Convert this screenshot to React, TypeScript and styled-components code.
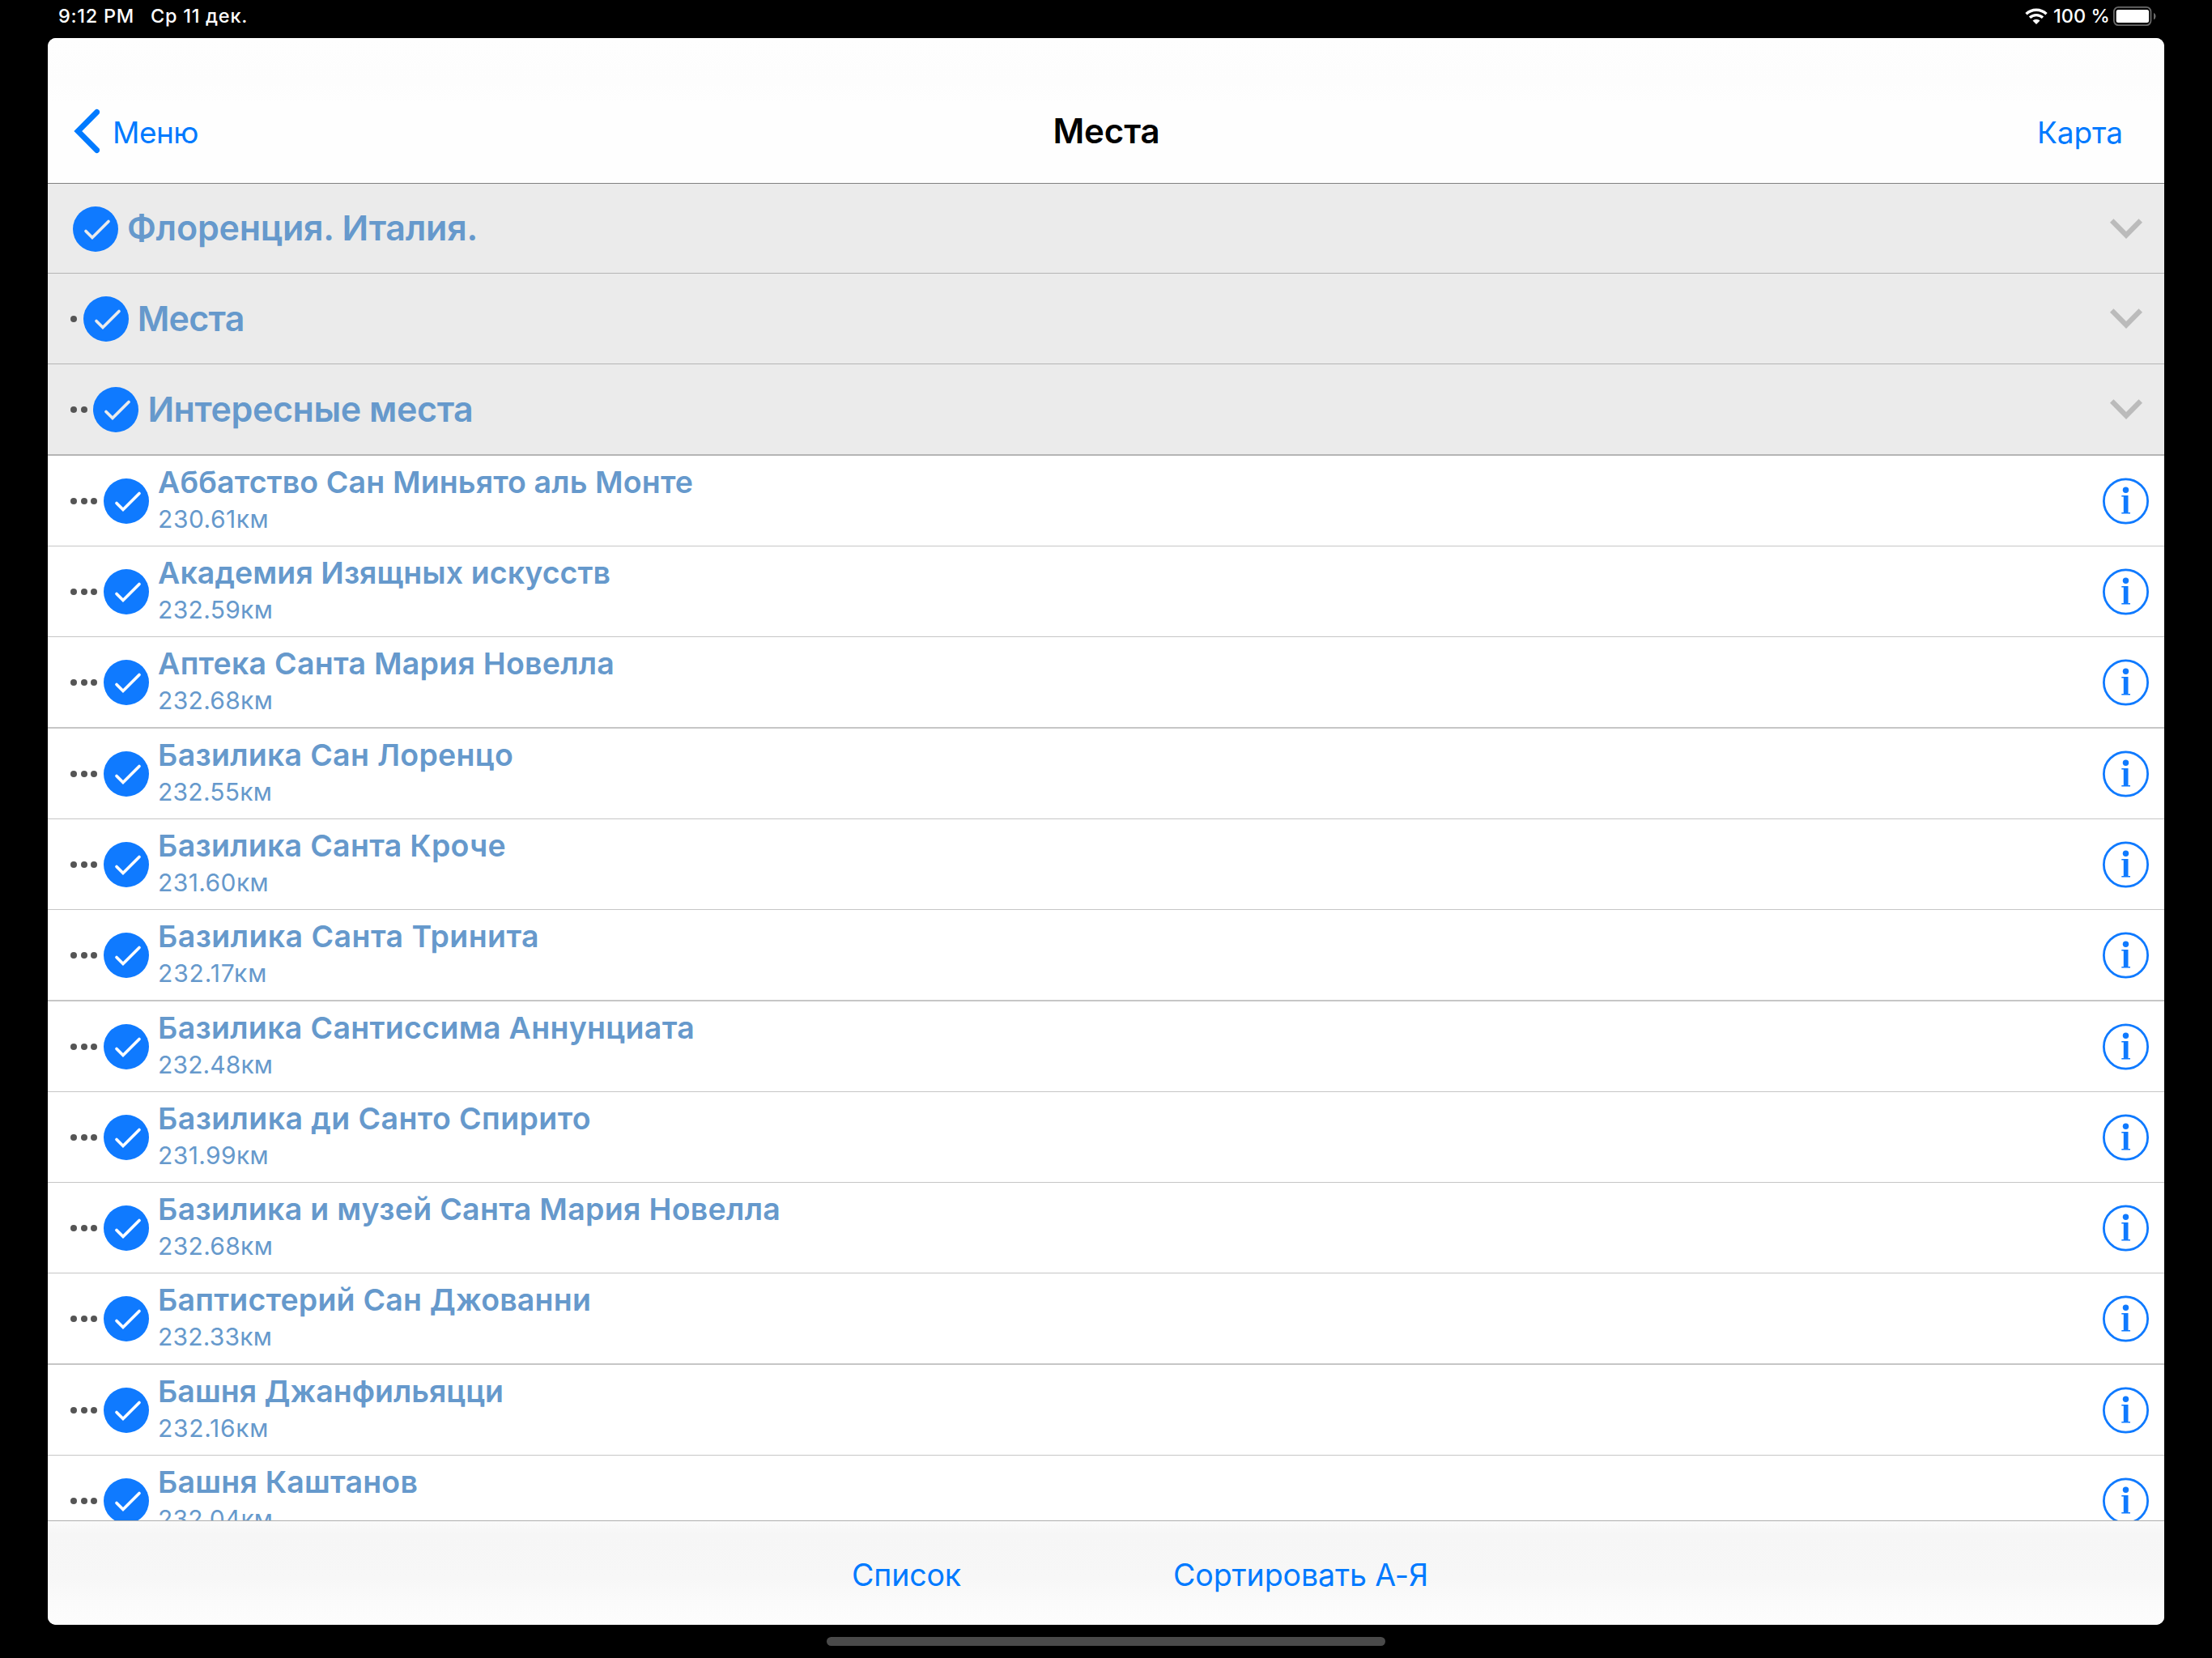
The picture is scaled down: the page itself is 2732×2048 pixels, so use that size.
import React, { useLayoutEffect, useRef } from "react";
import styled, { createGlobalStyle } from "styled-components";

const GlobalStyle = createGlobalStyle`
  * { box-sizing: border-box; }
  html, body { margin: 0; background: #000; }
  body { font-family: Inter, "Liberation Sans", sans-serif; -webkit-font-smoothing: antialiased; }
`;

const Screen = styled.div`
  width: 2732px;
  height: 2048px;
  background: #000;
  display: flex;
  flex-direction: column;
  overflow: hidden;
`;

const StatusBar = styled.header`
  height: 47px;
  padding: 0 69px 0 72px;
  display: flex;
  justify-content: space-between;
  align-items: flex-start;
  color: #fff;
`;

const StatusGroup = styled.div<{ $gap: number }>`
  display: flex;
  align-items: center;
  height: 40px;
  gap: ${(p) => p.$gap}px;
`;

const AppWindow = styled.main`
  width: 2614px;
  height: 1960px;
  margin-left: 59px;
  border-radius: 10px;
  background: #fff;
  overflow: hidden;
  display: flex;
  flex-direction: column;
`;

const NavBar = styled.nav`
  height: 180px;
  flex: none;
  padding: 50px 51px 0 32px;
  display: grid;
  grid-template-columns: 1fr auto 1fr;
  align-items: center;
  background: linear-gradient(#fefefe 0, #fdfdfd 30%, #fefefe 45%, #fefefe 100%);
  border-bottom: 1px solid #808080;
`;

const NavTitle = styled.div`
  margin: 0 -10px 0 10px;
`;

const NavButton = styled.button<{ $end?: boolean }>`
  border: 0;
  padding: ${(p) => (p.$end ? 4 : 0)}px 0 0;
  background: none;
  font: inherit;
  color: #007aff;
  display: flex;
  align-items: center;
  gap: 16px;
  justify-self: ${(p) => (p.$end ? "end" : "start")};
  span { padding-top: ${(p) => (p.$end ? 0 : 4)}px; }
`;

const List = styled.ul`
  list-style: none;
  margin: 0;
  padding: 0;
  flex: 1;
  min-height: 0;
  overflow: hidden;
`;

const Row = styled.li<{ $section?: boolean; $height: number; $line: number }>`
  height: ${(p) => p.$height}px;
  padding: 1px ${(p) => (p.$section ? 27 : 18)}px 0 28px;
  display: flex;
  align-items: center;
  background: ${(p) => (p.$section ? "#ebebeb" : "#fff")};
  border-bottom: ${(p) => p.$line}px solid ${(p) => (p.$section ? "#b5b5b5" : "#c6c6c6")};
`;

const Dots = styled.span<{ $count: number }>`
  flex: none;
  width: ${(p) => p.$count * 12.7 + 3}px;
  height: 8px;
  margin-top: -1px;
  display: flex;
  gap: 4.7px;
  i {
    flex: none;
    width: 8px;
    height: 8px;
    border-radius: 50%;
    background: #555;
  }
`;

const Labels = styled.div<{ $lift: number }>`
  flex: 1;
  min-width: 0;
  margin-left: 11px;
  height: 100%;
  padding-bottom: ${(p) => p.$lift}px;
  display: flex;
  flex-direction: column;
  justify-content: center;
  color: #6699cc;
`;

const Toolbar = styled.footer`
  flex: none;
  height: 129px;
  border-top: 1px solid #aeaeae;
  background: linear-gradient(#fafafa 0, #f6f6f6 12%, #f7f7f7 55%, #fbfbfb 80%, #fdfdfd 100%);
  padding: 5px 0 0 993px;
  display: flex;
  align-items: center;
  gap: 262px;
  color: #007aff;
`;

const HomeArea = styled.div`
  flex: 1;
  display: flex;
  justify-content: center;
  padding-top: 15px;
`;

const HomeBar = styled.div`
  width: 690px;
  height: 11px;
  border-radius: 6px;
  background: #4a4a4a;
`;

const Line = styled.span<{ $size: number; $weight: number; $height: number }>`
  display: block;
  width: max-content;
  white-space: nowrap;
  font-size: ${(p) => p.$size}px;
  font-weight: ${(p) => p.$weight};
  line-height: ${(p) => p.$height}px;
`;

type FitProps = { text: string; width: number; size: number; weight?: number; height: number };

/* A line of text tracked so that it fills the given width. */
function Fit({ text, width, size, weight = 400, height }: FitProps) {
  const ref = useRef<HTMLSpanElement>(null);
  useLayoutEffect(() => {
    const el = ref.current;
    if (!el) return;
    el.style.letterSpacing = "0px";
    const natural = el.getBoundingClientRect().width;
    el.style.letterSpacing = `${(width - natural) / text.length}px`;
  }, [text, width, size]);
  return (
    <Line ref={ref} $size={size} $weight={weight} $height={height}>
      {text}
    </Line>
  );
}

const Icon = styled.svg`
  display: block;
  flex: none;
`;

const WifiIcon = styled(Icon)`
  margin-right: 3px;
`;

const Check = ({ section }: { section?: boolean }) => (
  <Icon width="56" height="56" viewBox="0 0 56 56">
    <circle cx="28" cy="28" r="28" fill="#0f7aff" />
    <path d="M16 30.5 L24 38.5 L44 18.5" fill="none" stroke={section ? "#ebebeb" : "#fff"} strokeWidth="3.7" strokeLinecap="round" />
  </Icon>
);

const Chevron = () => (
  <Icon width="40" height="26" viewBox="0 0 40 26">
    <path d="M2.2 2.5 L20 20.5 L37.8 2.5" fill="none" stroke="#bbb" strokeWidth="6.4" />
  </Icon>
);

const Info = () => (
  <Icon width="58" height="58" viewBox="0 0 58 58">
    <circle cx="28.5" cy="29" r="27.1" fill="none" stroke="#0f7aff" strokeWidth="2.8" />
    <circle cx="28.5" cy="15.2" r="3.7" fill="#0f7aff" />
    <path d="M23.3 22 H31.5 V43 H34 V44.4 H23.3 V43 H25.8 V23.6 H23.3 Z" fill="#0f7aff" />
  </Icon>
);

const BackArrow = () => (
  <Icon width="32" height="56" viewBox="0 0 32 56">
    <path d="M28.6 4.5 L5.3 28 L28.6 51.5" fill="none" stroke="#007aff" strokeWidth="7" strokeLinecap="round" />
  </Icon>
);

const Wifi = () => (
  <WifiIcon width="28" height="20" viewBox="0 0 28 20">
    <g fill="none" stroke="#fff" strokeWidth="3.3">
      <path d="M1.5 7.3 A18 18 0 0 1 26.5 7.3" />
      <path d="M6 11.8 A11.5 11.5 0 0 1 22 11.8" />
    </g>
    <path d="M14 20 L9.5 15.6 A6.5 6.5 0 0 1 18.5 15.6 Z" fill="#fff" />
  </WifiIcon>
);

const Battery = () => (
  <Icon width="53" height="24" viewBox="0 0 53 24">
    <rect x="0.9" y="0.9" width="45.6" height="22.2" rx="5.5" fill="none" stroke="#6a6a6a" strokeWidth="1.8" />
    <rect x="3.7" y="4" width="40.4" height="16" rx="2.5" fill="#fff" />
    <path d="M50 7.8 Q52.6 9 52.6 12 Q52.6 15 50 16.2 Z" fill="#6a6a6a" />
  </Icon>
);

const sections = [
  { title: "Флоренция. Италия.", width: 433, height: 111, line: 1 },
  { title: "Места", width: 132, height: 112, line: 1 },
  { title: "Интересные места", width: 402, height: 113, line: 2 },
];

const places = [
  { title: "Аббатство Сан Миньято аль Монте", width: 661, km: "230.61км", kmWidth: 137, height: 112 },
  { title: "Академия Изящных искусств", width: 559, km: "232.59км", kmWidth: 142, height: 112 },
  { title: "Аптека Санта Мария Новелла", width: 564, km: "232.68км", kmWidth: 142, height: 113, thick: true },
  { title: "Базилика Сан Лоренцо", width: 439, km: "232.55км", kmWidth: 141, height: 112 },
  { title: "Базилика Санта Кроче", width: 430, km: "231.60км", kmWidth: 137, height: 112 },
  { title: "Базилика Санта Тринита", width: 471, km: "232.17км", kmWidth: 135, height: 113, thick: true },
  { title: "Базилика Сантиссима Аннунциата", width: 663, km: "232.48км", kmWidth: 142, height: 112 },
  { title: "Базилика ди Санто Спирито", width: 535, km: "231.99км", kmWidth: 137, height: 112 },
  { title: "Базилика и музей Санта Мария Новелла", width: 769, km: "232.68км", kmWidth: 142, height: 112 },
  { title: "Баптистерий Сан Джованни", width: 535, km: "232.33км", kmWidth: 141, height: 113, thick: true },
  { title: "Башня Джанфильяцци", width: 427, km: "232.16км", kmWidth: 137, height: 112 },
  { title: "Башня Каштанов", width: 321, km: "232.04км", kmWidth: 142, height: 112 },
];

export default function App() {
  return (
    <Screen>
      <GlobalStyle />
      <StatusBar>
        <StatusGroup $gap={20}>
          <Fit text="9:12 PM" width={94} size={23.5} weight={450} height={40} />
          <Fit text="Ср 11 дек." width={120} size={23.5} weight={450} height={40} />
        </StatusGroup>
        <StatusGroup $gap={4}>
          <Wifi />
          <Fit text="100 %" width={70} size={23.5} weight={450} height={40} />
          <Battery />
        </StatusGroup>
      </StatusBar>
      <AppWindow>
        <NavBar>
          <NavButton>
            <BackArrow />
            <Fit text="Меню" width={106} size={37} height={42} />
          </NavButton>
          <NavTitle>
            <Fit text="Места" width={132} size={42} weight={600} height={130} />
          </NavTitle>
          <NavButton $end>
            <Fit text="Карта" width={106} size={37} height={42} />
          </NavButton>
        </NavBar>
        <List>
          {sections.map((s, i) => (
            <Row key={s.title} $section $height={s.height} $line={s.line}>
              <Dots $count={i}>{Array.from({ length: i }, (_, n) => <i key={n} />)}</Dots>
              <Check section />
              <Labels $lift={3}>
                <Fit text={s.title} width={s.width} size={43} weight={600} height={56} />
              </Labels>
              <Chevron />
            </Row>
          ))}
          {places.map((p) => (
            <Row key={p.title} $height={p.height} $line={p.thick ? 2 : 1}>
              <Dots $count={3}>{[0, 1, 2].map((n) => <i key={n} />)}</Dots>
              <Check />
              <Labels $lift={4.5}>
                <Fit text={p.title} width={p.width} size={37.5} weight={600} height={50} />
                <Fit text={p.km} width={p.kmWidth} size={30} height={41} />
              </Labels>
              <Info />
            </Row>
          ))}
        </List>
        <Toolbar>
          <Fit text="Список" width={135} size={37.5} height={50} />
          <Fit text="Сортировать А-Я" width={315} size={37.5} height={50} />
        </Toolbar>
      </AppWindow>
      <HomeArea>
        <HomeBar />
      </HomeArea>
    </Screen>
  );
}
